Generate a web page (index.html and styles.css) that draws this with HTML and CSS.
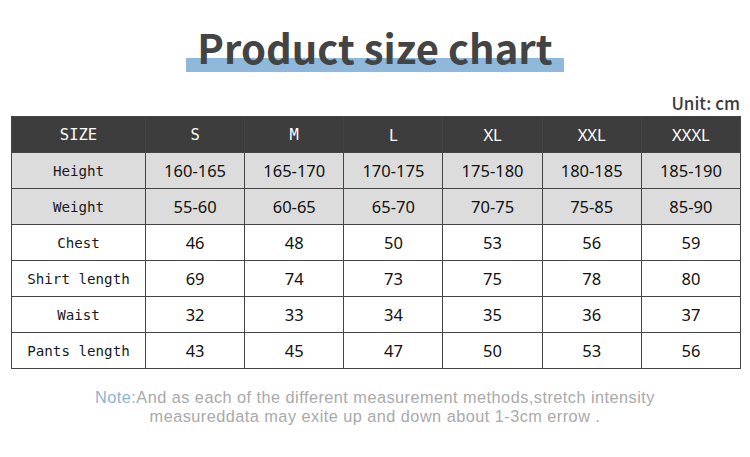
FILE: index.html
```html
<!DOCTYPE html>
<html>
<head>
<meta charset="utf-8">
<link rel="stylesheet" href="styles.css">
</head>
<body>
<div class="page">
  <div class="title-wrap">
    <div class="title-bar"></div>
    <h1 class="title">Product size chart</h1>
  </div>
  <div class="unit">Unit: cm</div>
  <table class="chart">
    <colgroup>
      <col class="c-first"><col><col><col><col><col><col>
    </colgroup>
    <tr class="head">
      <td class="label">SIZE</td><td class="mono">S</td><td class="mono">M</td><td>L</td><td>XL</td><td>XXL</td><td>XXXL</td>
    </tr>
    <tr class="shade">
      <td class="label">Height</td><td>160-165</td><td>165-170</td><td>170-175</td><td>175-180</td><td>180-185</td><td>185-190</td>
    </tr>
    <tr class="shade">
      <td class="label">Weight</td><td>55-60</td><td>60-65</td><td>65-70</td><td>70-75</td><td>75-85</td><td>85-90</td>
    </tr>
    <tr>
      <td class="label">Chest</td><td>46</td><td>48</td><td>50</td><td>53</td><td>56</td><td>59</td>
    </tr>
    <tr>
      <td class="label">Shirt length</td><td>69</td><td>74</td><td>73</td><td>75</td><td>78</td><td>80</td>
    </tr>
    <tr>
      <td class="label">Waist</td><td>32</td><td>33</td><td>34</td><td>35</td><td>36</td><td>37</td>
    </tr>
    <tr>
      <td class="label">Pants length</td><td>43</td><td>45</td><td>47</td><td>50</td><td>53</td><td>56</td>
    </tr>
  </table>
  <p class="note"><span class="note-key">Note:</span>And as each of the different measurement methods,stretch intensity<br>measureddata may exite up and down about 1-3cm errow .</p>
</div>
</body>
</html>
```

FILE: styles.css
```css
html, body {
  margin: 0;
  padding: 0;
  background: #fff;
}
.page {
  width: 750px;
  height: 457px;
  overflow: hidden;
  display: flex;
  flex-direction: column;
  align-items: center;
  font-family: "Noto Sans", "Liberation Sans", sans-serif;
}
.title-wrap {
  position: relative;
  width: 378px;
  height: 72px;
}
.title-bar {
  position: absolute;
  left: 0;
  right: 0;
  top: 58px;
  height: 14px;
  background: #8fb9dc;
}
.title {
  position: relative;
  margin: 0;
  padding-top: 21px;
  text-align: center;
  font-family: "Noto Sans CJK SC", "Noto Sans", sans-serif;
  font-weight: 700;
  font-size: 40px;
  line-height: 52px;
  color: #444;
}
.unit {
  align-self: flex-end;
  margin-right: 10px;
  margin-top: 18px;
  font-family: "Noto Sans CJK SC", "Noto Sans", sans-serif;
  font-weight: 500;
  font-size: 17px;
  line-height: 26px;
  color: #3a3a3a;
}
.chart {
  border-collapse: collapse;
  width: 730px;
  table-layout: fixed;
  margin-left: 2px;
}
.c-first {
  width: 134px;
}
.chart td {
  border: 1.5px solid #444;
  height: 35px;
  padding: 0;
  text-align: center;
  font-size: 16.5px;
  color: #111;
  font-family: "Noto Sans", "Liberation Sans", sans-serif;
}
.chart td.label {
  font-family: "DejaVu Sans Mono", "Liberation Mono", monospace;
  font-size: 14.2px;
  color: #1a1a1a;
}
.head td {
  background: #3d3d3d;
  color: #fff;
}
.head td.label, .head td.mono {
  color: #fff;
  font-family: "DejaVu Sans Mono", monospace;
  font-size: 15.5px;
}
.shade td {
  background: #dcdcdc;
}
.note {
  margin: 19px 0 0;
  text-align: center;
  font-family: "Liberation Sans", "Open Sans", sans-serif;
  font-size: 16.3px;
  line-height: 19px;
  letter-spacing: 0.47px;
  color: #a9a9a9;
}
.note-key {
  color: #8ab4d8;
}
```
